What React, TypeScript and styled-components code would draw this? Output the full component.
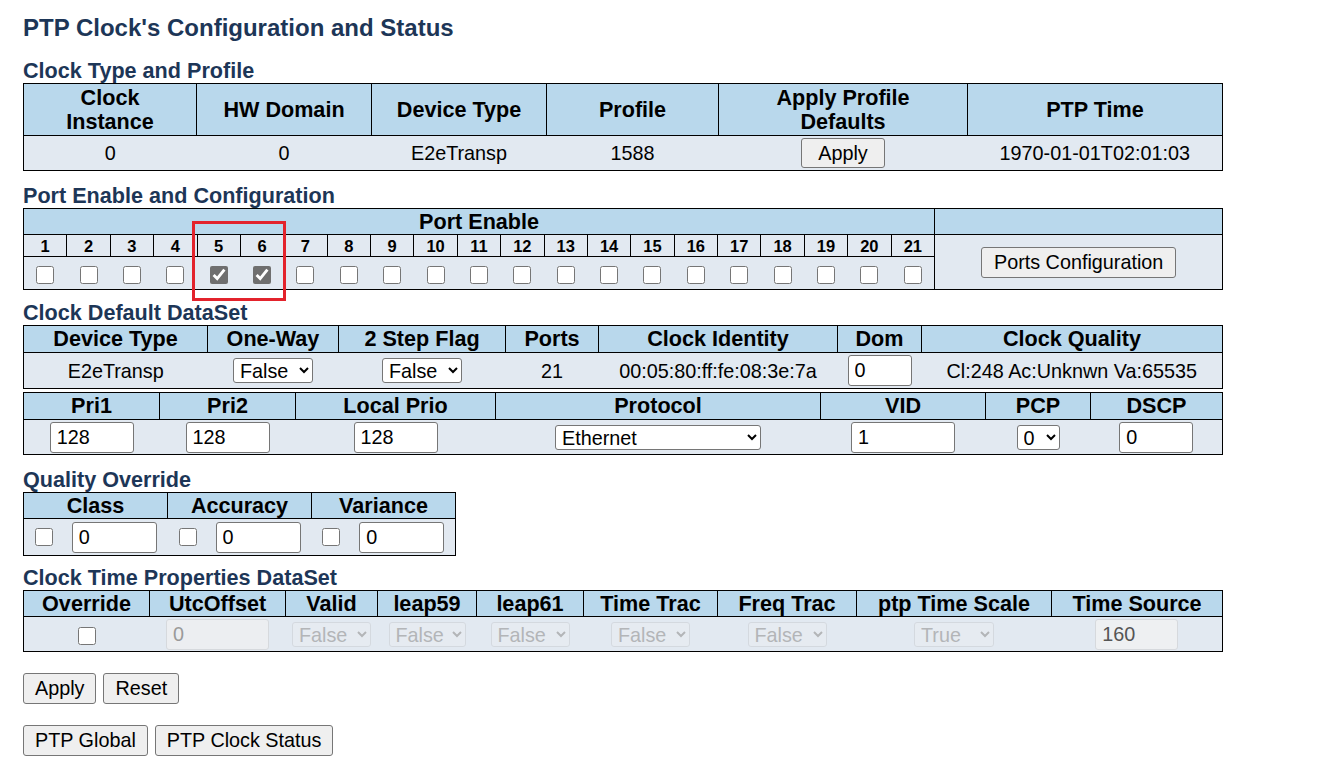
import React from 'react'
import styled, { createGlobalStyle } from 'styled-components'

const GlobalStyle = createGlobalStyle`
  body {
    margin: 0;
    background: #fff;
    font-family: "Liberation Sans", Arial, sans-serif;
    color: #000;
  }
`

const Page = styled.div`
  padding: 14px 0 0 23px;
`
const Title = styled.h1`
  margin: 0;
  font-size: 24px;
  line-height: 28px;
  font-weight: bold;
  color: #1d3657;
`
const SectionTitle = styled.h2<{ $gap: number }>`
  margin: ${p => p.$gap}px 0 0 0;
  font-size: 21.6px;
  line-height: 24px;
  font-weight: bold;
  color: #1d3657;
`
const Table = styled.table<{ $width: number; $gap?: number }>`
  width: ${p => p.$width}px;
  margin-top: ${p => p.$gap ?? 0}px;
  border-collapse: collapse;
  table-layout: fixed;
  border: 1px solid #000;
`
const Row = styled.tr<{ $h: number }>`
  height: ${p => p.$h}px;
`
const Th = styled.th<{ $light?: boolean; $small?: boolean }>`
  background: ${p => (p.$light ? '#e2e9f1' : '#b9d8ec')};
  border: 1px solid #000;
  padding: 0;
  font-size: ${p => (p.$small ? '16.5px' : '21.6px')};
  line-height: ${p => (p.$small ? '18px' : '24px')};
  font-weight: bold;
  text-align: center;
  vertical-align: middle;
`
const Td = styled.td`
  background: #e2e9f1;
  padding: 0;
  font-size: 19.8px;
  line-height: 22px;
  text-align: center;
  vertical-align: middle;
`
const Button = styled.button<{ $w?: number }>`
  height: 31px;
  ${p => (p.$w ? `width: ${p.$w}px;` : 'padding: 0 11px;')}
  font-family: "Liberation Sans", Arial, sans-serif;
  font-size: 19.8px;
  color: #000;
  background: #efefef;
  border: 1px solid #767676;
  border-radius: 3px;
`
const TextInput = styled.input<{ $w: number }>`
  box-sizing: border-box;
  width: ${p => p.$w}px;
  height: 31px;
  padding: 0 6px;
  font-family: "Liberation Sans", Arial, sans-serif;
  font-size: 19.8px;
  color: #000;
  background: #fff;
  border: 1px solid #767676;
  border-radius: 3px;
  vertical-align: middle;
  &:disabled {
    background: #eceef1;
    border-color: #d6d9dd;
    color: #9a9a9a;
  }
  &:read-only:not(:disabled) {
    background: #eef0f2;
    border-color: #d6d9dd;
    color: #555;
  }
`
const Select = styled.select<{ $w: number }>`
  box-sizing: border-box;
  width: ${p => p.$w}px;
  height: 25px;
  padding: 0 0 0 2px;
  font-family: "Liberation Sans", Arial, sans-serif;
  font-size: 19.8px;
  color: #000;
  background: #fff;
  border: 1px solid #767676;
  border-radius: 3px;
  vertical-align: middle;
  &:disabled {
    background: #e9edf2;
    border-color: #cfd3d8;
    color: #a0a0a0;
  }
`
const Check = styled.input.attrs({ type: 'checkbox' })`
  width: 18px;
  height: 18px;
  margin: 0;
  vertical-align: middle;
  accent-color: #6f6f6f;
`
const Pair = styled.div`
  display: inline-flex;
  align-items: center;
  gap: 19px;
`
const PortWrap = styled.div`
  position: relative;
  width: 1200px;
`
const Highlight = styled.div`
  position: absolute;
  left: 169px;
  top: 13px;
  width: 94px;
  height: 80px;
  box-sizing: border-box;
  border: 3px solid #e3232c;
  pointer-events: none;
`
const ButtonRow = styled.div<{ $gap: number }>`
  display: flex;
  gap: 7px;
  margin-top: ${p => p.$gap}px;
`

const Cols = ({ widths }: { widths: number[] }) => (
  <colgroup>
    {widths.map((w, i) => (
      <col key={i} style={{ width: w }} />
    ))}
  </colgroup>
)

const ports = Array.from({ length: 21 }, (_, i) => i + 1)
const portWidth = (1199 - 288) / 21

const timeFlags = [
  { w: 79, v: 'False' },
  { w: 77, v: 'False' },
  { w: 79, v: 'False' },
  { w: 79, v: 'False' },
  { w: 79, v: 'False' },
]

export default function App() {
  return (
    <Page>
      <GlobalStyle />
      <Title>PTP Clock's Configuration and Status</Title>

      <SectionTitle $gap={17}>Clock Type and Profile</SectionTitle>
      <Table $width={1200}>
        <Cols widths={[173, 175, 175, 172, 249, 255]} />
        <tbody>
          <Row $h={52}>
            <Th>Clock<br />Instance</Th>
            <Th>HW Domain</Th>
            <Th>Device Type</Th>
            <Th>Profile</Th>
            <Th>Apply Profile<br />Defaults</Th>
            <Th>PTP Time</Th>
          </Row>
          <Row $h={35}>
            <Td>0</Td>
            <Td>0</Td>
            <Td>E2eTransp</Td>
            <Td>1588</Td>
            <Td><Button $w={84} style={{ height: 30 }}>Apply</Button></Td>
            <Td>1970-01-01T02:01:03</Td>
          </Row>
        </tbody>
      </Table>

      <SectionTitle $gap={13}>Port Enable and Configuration</SectionTitle>
      <PortWrap>
        <Table $width={1200}>
          <Cols widths={[...ports.map(() => portWidth), 288]} />
          <tbody>
            <Row $h={26}>
              <Th colSpan={21}>Port Enable</Th>
              <Th />
            </Row>
            <Row $h={22}>
              {ports.map(p => (
                <Th key={p} $light $small>{p}</Th>
              ))}
              <Td rowSpan={2} style={{ borderLeft: '1px solid #000' }}>
                <Button $w={195}>Ports Configuration</Button>
              </Td>
            </Row>
            <Row $h={33}>
              {ports.map(p => (
                <Td key={p}>
                  <Check defaultChecked={p === 5 || p === 6} />
                </Td>
              ))}
            </Row>
          </tbody>
        </Table>
        <Highlight />
      </PortWrap>

      <SectionTitle $gap={11}>Clock Default DataSet</SectionTitle>
      <Table $width={1200}>
        <Cols widths={[184, 131, 167, 93, 239, 84, 301]} />
        <tbody>
          <Row $h={27}>
            <Th>Device Type</Th>
            <Th>One-Way</Th>
            <Th>2 Step Flag</Th>
            <Th>Ports</Th>
            <Th>Clock Identity</Th>
            <Th>Dom</Th>
            <Th>Clock Quality</Th>
          </Row>
          <Row $h={36}>
            <Td>E2eTransp</Td>
            <Td>
              <Select $w={80} defaultValue="False"><option>False</option><option>True</option></Select>
            </Td>
            <Td>
              <Select $w={80} defaultValue="False"><option>False</option><option>True</option></Select>
            </Td>
            <Td>21</Td>
            <Td>00:05:80:ff:fe:08:3e:7a</Td>
            <Td><TextInput $w={64} defaultValue="0" /></Td>
            <Td>Cl:248 Ac:Unknwn Va:65535</Td>
          </Row>
        </tbody>
      </Table>
      <Table $width={1200} $gap={3}>
        <Cols widths={[136, 136, 200, 325, 165, 105, 132]} />
        <tbody>
          <Row $h={27}>
            <Th>Pri1</Th>
            <Th>Pri2</Th>
            <Th>Local Prio</Th>
            <Th>Protocol</Th>
            <Th>VID</Th>
            <Th>PCP</Th>
            <Th>DSCP</Th>
          </Row>
          <Row $h={35}>
            <Td><TextInput $w={84} defaultValue="128" /></Td>
            <Td><TextInput $w={84} defaultValue="128" /></Td>
            <Td><TextInput $w={84} defaultValue="128" /></Td>
            <Td>
              <Select $w={206} defaultValue="Ethernet">
                <option>Ethernet</option>
                <option>IPv4 Multi</option>
              </Select>
            </Td>
            <Td><TextInput $w={104} defaultValue="1" /></Td>
            <Td>
              <Select $w={43} defaultValue="0">
                {[0, 1, 2, 3, 4, 5, 6, 7].map(n => <option key={n}>{n}</option>)}
              </Select>
            </Td>
            <Td><TextInput $w={74} defaultValue="0" /></Td>
          </Row>
        </tbody>
      </Table>

      <SectionTitle $gap={13}>Quality Override</SectionTitle>
      <Table $width={432}>
        <Cols widths={[144, 144, 144]} />
        <tbody>
          <Row $h={26}>
            <Th>Class</Th>
            <Th>Accuracy</Th>
            <Th>Variance</Th>
          </Row>
          <Row $h={37}>
            {['class', 'accuracy', 'variance'].map(k => (
              <Td key={k}>
                <Pair>
                  <Check />
                  <TextInput $w={85} defaultValue="0" />
                </Pair>
              </Td>
            ))}
          </Row>
        </tbody>
      </Table>

      <SectionTitle $gap={10}>Clock Time Properties DataSet</SectionTitle>
      <Table $width={1200}>
        <Cols widths={[126, 136, 92, 99, 107, 134, 139, 195, 171]} />
        <tbody>
          <Row $h={26}>
            <Th>Override</Th>
            <Th>UtcOffset</Th>
            <Th>Valid</Th>
            <Th>leap59</Th>
            <Th>leap61</Th>
            <Th>Time Trac</Th>
            <Th>Freq Trac</Th>
            <Th>ptp Time Scale</Th>
            <Th>Time Source</Th>
          </Row>
          <Row $h={35}>
            <Td><Check /></Td>
            <Td><TextInput $w={103} defaultValue="0" disabled /></Td>
            {timeFlags.map((f, i) => (
              <Td key={i}>
                <Select $w={f.w} defaultValue={f.v} disabled>
                  <option>False</option>
                  <option>True</option>
                </Select>
              </Td>
            ))}
            <Td>
              <Select $w={80} defaultValue="True" disabled>
                <option>True</option>
                <option>False</option>
              </Select>
            </Td>
            <Td><TextInput $w={83} defaultValue="160" readOnly /></Td>
          </Row>
        </tbody>
      </Table>

      <ButtonRow $gap={21}>
        <Button>Apply</Button>
        <Button>Reset</Button>
      </ButtonRow>
      <ButtonRow $gap={21}>
        <Button>PTP Global</Button>
        <Button>PTP Clock Status</Button>
      </ButtonRow>
    </Page>
  )
}
